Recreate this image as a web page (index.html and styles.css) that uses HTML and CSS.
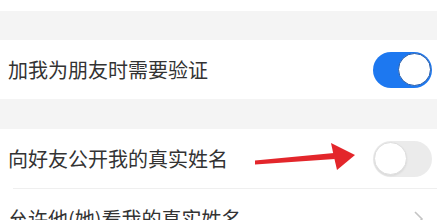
FILE: index.html
```html
<!DOCTYPE html>
<html lang="zh">
<head>
<meta charset="utf-8">
<link rel="stylesheet" href="styles.css">
</head>
<body>
<div class="page">
  <div class="top"></div>
  <div class="gap"></div>
  <div class="row">
    <span class="label">加我为朋友时需要验证</span>
    <span class="switch on"><span class="knob"></span></span>
  </div>
  <div class="gap"></div>
  <div class="row">
    <span class="label">向好友公开我的真实姓名</span>
    <svg class="arrow" width="110" height="36" viewBox="0 0 110 36">
      <polygon points="5,21.5 84,14 85,20 5,25.5" fill="#e3262b"/>
      <polygon points="81,4 105,16 87,31 84,18" fill="#e3262b"/>
    </svg>
    <span class="switch off"><span class="knob"></span></span>
  </div>
  <div class="divider"></div>
  <div class="row">
    <span class="label">允许他(她)看我的真实姓名</span>
    <svg class="chev" width="12" height="18" viewBox="0 0 12 18">
      <polyline points="2,2 9,9 2,16" fill="none" stroke="#c4c4c4" stroke-width="1.6"/>
    </svg>
  </div>
</div>
</body>
</html>
```
FILE: styles.css
```css
html, body {
  margin: 0;
  padding: 0;
  background: #ffffff;
}
.page {
  width: 437px;
  height: 220px;
  overflow: hidden;
  font-family: "Noto Sans CJK SC", "Noto Sans", sans-serif;
}
.top {
  height: 11px;
  background: #ffffff;
}
.gap {
  height: 29px;
  background: #f4f4f4;
}
.gap + .row + .gap {
  height: 30px;
}
.row {
  position: relative;
  height: 59px;
  background: #ffffff;
  display: flex;
  align-items: center;
  justify-content: space-between;
  padding: 0 5px 0 8px;
}
.label {
  font-size: 20px;
  color: #333333;
  line-height: 24px;
}
.switch {
  position: relative;
  width: 59px;
  height: 36px;
  border-radius: 18px;
  box-sizing: border-box;
  display: flex;
  align-items: center;
  padding: 0 1px;
}
.switch.on {
  background: #1d78f0;
  justify-content: flex-end;
}
.switch.off {
  background: #ebebeb;
  justify-content: flex-start;
}
.knob {
  width: 33px;
  height: 33px;
  border-radius: 50%;
  background: #ffffff;
  box-sizing: border-box;
}
.switch.on .knob {
  border: 1.5px solid #2a5ea8;
}
.switch.off .knob {
  border: 1px solid #dedede;
  box-shadow: 0 1px 2px rgba(0,0,0,0.08);
}
.arrow {
  position: absolute;
  left: 250px;
  top: 10px;
}
.divider {
  height: 1px;
  background: #efefef;
  margin-left: 13px;
}
.chev {
  margin-right: 7px;
}
```
